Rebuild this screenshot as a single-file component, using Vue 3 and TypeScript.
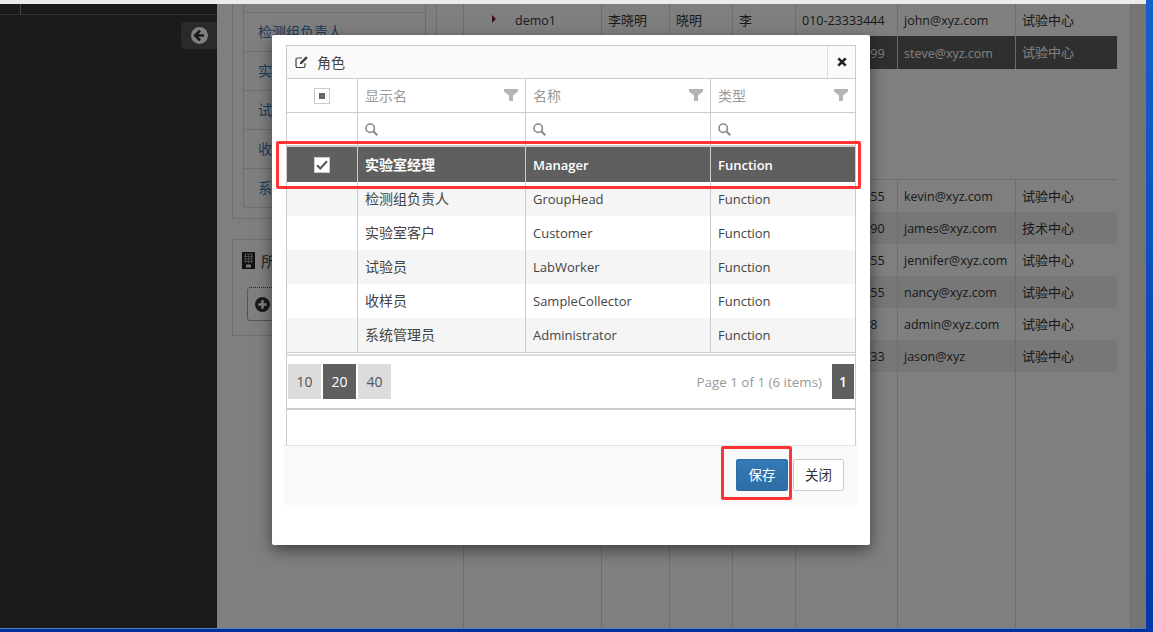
<script setup lang="ts">
interface Role { display: string; name: string; type: string }
interface Person { phone: string; mail: string; dept: string; stripe?: boolean; active?: boolean }

const listItems: string[] = ['检测组负责人', '实验室客户', '试验员', '收样员', '系统管理员']
const roles: Role[] = [
  { display: '实验室经理', name: 'Manager', type: 'Function' },
  { display: '检测组负责人', name: 'GroupHead', type: 'Function' },
  { display: '实验室客户', name: 'Customer', type: 'Function' },
  { display: '试验员', name: 'LabWorker', type: 'Function' },
  { display: '收样员', name: 'SampleCollector', type: 'Function' },
  { display: '系统管理员', name: 'Administrator', type: 'Function' }
]
const headers: string[] = ['显示名', '名称', '类型']
const lowerPeople: Person[] = [
  { phone: '010-55555555', mail: 'kevin@xyz.com', dept: '试验中心' },
  { phone: '010-12345690', mail: 'james@xyz.com', dept: '技术中心', stripe: true },
  { phone: '010-55555555', mail: 'jennifer@xyz.com', dept: '试验中心' },
  { phone: '010-55555555', mail: 'nancy@xyz.com', dept: '试验中心', stripe: true },
  { phone: '010-8888888', mail: 'admin@xyz.com', dept: '试验中心' },
  { phone: '010-33333333', mail: 'jason@xyz', dept: '试验中心', stripe: true }
]
const pageSizes: number[] = [10, 20, 40]
</script>

<template>
  <div class="screen">
    <div class="main">
      <div class="chrome"></div>
      <div class="app">
        <aside class="sidebar">
          <div class="side-top"><span class="side-tab"></span></div>
          <div class="back">
            <svg width="17" height="17" viewBox="0 0 17 17">
              <circle cx="8.5" cy="8.5" r="8.5" fill="#fff" />
              <path d="M9 3.6 4.2 8.5 9 13.4M4.8 8.5h8.2" fill="none" stroke="#333" stroke-width="2.6" />
            </svg>
          </div>
        </aside>

        <div class="content">
          <div class="left-col">
            <section class="panel list-panel">
              <div class="list-cut"></div>
              <div class="list">
                <a v-for="item in listItems" :key="item" class="list-item">{{ item }}</a>
              </div>
            </section>
            <section class="panel org-panel">
              <div class="org-title">
                <svg width="13" height="17" viewBox="0 0 13 17">
                  <rect width="13" height="17" fill="#222" />
                  <path d="M2 2h9M2 4.5h9M2 7h9M2 9.500h9M3.500 2v9M6.500 2v9M9.500 2v9" stroke="#999" stroke-width="1" fill="none" />
                  <rect x="4" y="12.500" width="5" height="3" fill="#eee" />
                </svg>
                <span>所属部门</span>
              </div>
              <div class="dotted">
                <svg width="15" height="15" viewBox="0 0 15 15">
                  <circle cx="7.500" cy="7.500" r="7.500" fill="#333" />
                  <path d="M7.500 3.300v8.400M3.300 7.500h8.400" stroke="#fff" stroke-width="2.600" />
                </svg>
              </div>
            </section>
          </div>

          <div class="table">
            <div class="t-row">
              <div class="t-cell first"><i class="arrow"></i>demo1</div>
              <div class="t-cell">李晓明</div>
              <div class="t-cell">晓明</div>
              <div class="t-cell">李</div>
              <div class="t-cell">010-23333444</div>
              <div class="t-cell">john@xyz.com</div>
              <div class="t-cell">试验中心</div>
            </div>
            <div class="t-row active">
              <div class="t-cell"></div>
              <div class="t-cell"></div>
              <div class="t-cell"></div>
              <div class="t-cell"></div>
              <div class="t-cell">010-99999999</div>
              <div class="t-cell">steve@xyz.com</div>
              <div class="t-cell">试验中心</div>
            </div>
            <div class="t-detail"></div>
            <div v-for="p in lowerPeople" :key="p.mail" class="t-row" :class="{ stripe: p.stripe }">
              <div class="t-cell"></div>
              <div class="t-cell"></div>
              <div class="t-cell"></div>
              <div class="t-cell"></div>
              <div class="t-cell">{{ p.phone }}</div>
              <div class="t-cell">{{ p.mail }}</div>
              <div class="t-cell">{{ p.dept }}</div>
            </div>
            <div class="t-row filler">
              <div v-for="n in 7" :key="n" class="t-cell"></div>
            </div>
          </div>

          <div class="scrollbar"></div>
        </div>

        <div class="backdrop">
          <div class="modal">
            <div class="grid-panel">
              <div class="title-bar">
                <div class="title-text">
                  <svg width="14" height="14" viewBox="0 0 14 14">
                    <path d="M10 8.200V11a1.500 1.500 0 0 1-1.500 1.500H2.500A1.500 1.500 0 0 1 1 11V4.500A1.500 1.500 0 0 1 2.500 3H7" fill="none" stroke="#444" stroke-width="1.200" />
                    <path d="M5 7.200 11 1.200l1.800 1.800-6 6H5z" fill="#444" />
                  </svg>
                  <span>角色</span>
                </div>
                <div class="close-cell">
                  <svg width="10" height="10" viewBox="0 0 10 10">
                    <path d="M1.300 1.300l7.400 7.400M8.700 1.300 1.300 8.700" stroke="#222" stroke-width="2.600" />
                  </svg>
                </div>
              </div>

              <div class="g-row head">
                <div class="g-cell check-cell">
                  <span class="checkbox"><i class="square"></i></span>
                </div>
                <div v-for="h in headers" :key="h" class="g-cell head-cell">
                  <span>{{ h }}</span>
                  <svg width="14" height="12" viewBox="0 0 14 12">
                    <path d="M0 0h14v2.500L9 6.500V12H5V6.500L0 2.500z" fill="#b4b4b4" />
                  </svg>
                </div>
              </div>

              <div class="g-row filter">
                <div class="g-cell"></div>
                <div v-for="h in headers" :key="h" class="g-cell">
                  <svg width="13" height="13" viewBox="0 0 13 13">
                    <circle cx="5.200" cy="5.200" r="4.200" fill="none" stroke="#888" stroke-width="1.600" />
                    <path d="M8.300 8.300 12.300 12.300" stroke="#888" stroke-width="2" />
                  </svg>
                </div>
              </div>

              <div
                v-for="(r, i) in roles"
                :key="r.name"
                class="g-row body"
                :class="{ selected: i === 0, after: i === 1, odd: i === 3 || i === 5 || i === 1 }"
              >
                <div class="g-cell check-cell">
                  <span v-if="i === 0" class="checkbox checked">
                    <svg width="12" height="10" viewBox="0 0 12 10">
                      <path d="M1 5.200 4.300 8.500 11 1.300" fill="none" stroke="#555" stroke-width="2" />
                    </svg>
                  </span>
                </div>
                <div class="g-cell cjk">{{ r.display }}</div>
                <div class="g-cell">{{ r.name }}</div>
                <div class="g-cell">{{ r.type }}</div>
              </div>

              <div class="pager">
                <div class="sizes">
                  <span v-for="s in pageSizes" :key="s" class="page-btn" :class="{ on: s === 20 }">{{ s }}</span>
                </div>
                <div class="page-info">
                  <span>Page 1 of 1 (6 items)</span>
                  <span class="page-btn on bold">1</span>
                </div>
              </div>
              <div class="grid-space"></div>
            </div>

            <div class="footer">
              <button class="btn primary">保存</button>
              <button class="btn plain">关闭</button>
            </div>

            <div class="mark mark-row"></div>
            <div class="mark mark-save"></div>
          </div>
        </div>
      </div>
      <div class="taskbar"></div>
    </div>
    <div class="desktop"></div>
  </div>
</template>

<style>
html, body { margin: 0; padding: 0; overflow: hidden; }
</style>

<style scoped>
.screen {
  display: flex;
  width: 1153px;
  height: 632px;
  overflow: hidden;
  font-family: "Open Sans", "Noto Sans CJK SC", sans-serif;
  font-size: 13px;
  color: #333;
}
.main { width: 1146px; display: flex; flex-direction: column; }
.desktop { width: 7px; background: linear-gradient(#1660cc, #0338a6); }
.chrome { height: 4px; background: #ebebeb; }
.taskbar { height: 4px; background: #00309a; border-top: 1px solid #4f7fc4; box-sizing: border-box; }
.app { position: relative; flex: 1; display: flex; overflow: hidden; min-height: 0; }

.sidebar { width: 217px; background: #383634; display: flex; flex-direction: column; align-items: flex-end; }
.side-top { width: 100%; border-bottom: 1px solid #666; flex: none; height: 10px; }
.side-tab { display: block; width: 20px; height: 10px; border-right: 1px solid #888; }
.back {
  margin-top: 7px;
  width: 36px;
  height: 27px;
  background: #555;
  border-radius: 4px 0 0 4px;
  display: flex;
  align-items: center;
  justify-content: center;
}

.content { flex: 1; background: #fff; display: flex; padding-left: 15px; min-width: 0; }
.left-col { width: 205px; margin-right: 26px; flex: none; }
.panel { border: 1px solid #ddd; box-sizing: border-box; }
.list-panel { height: 215px; border-top: 0; padding: 0 10px 0 10px; }
.list-cut { height: 8px; border: 1px solid #ddd; border-width: 0 1px 1px; }
.list { border: 1px solid #ddd; border-top: 0; border-radius: 0 0 3px 3px; }
.list-item {
  display: flex;
  align-items: center;
  height: 36px;
  padding: 0 0 2px 14px;
  color: #337ab7;
  font-size: 14px;
  border-bottom: 1px solid #ddd;
}
.list-item:last-child { border-bottom: 0; }
.org-panel { height: 97px; margin-top: 20px; padding: 11px 10px 0 9px; }
.org-title { display: flex; align-items: center; gap: 6px; height: 19px; font-size: 15px; color: #444; }
.dotted {
  margin: 17px 0 0 5px;
  height: 34px;
  border: 1px dotted #555;
  border-radius: 4px;
  box-sizing: border-box;
  display: flex;
  align-items: center;
  padding-left: 7px;
}

.table { width: 654px; flex: none; display: flex; flex-direction: column; margin-right: 13px; }
.t-row { display: grid; grid-template-columns: 138px 68px 63px 63px 102px 118px 102px; height: 32px; flex: none; }
.t-row.active { height: 33px; background: #5f5f5f; color: #fff; }
.t-row.stripe { background: #efefef; }
.t-row.filler { flex: 1; height: auto; min-height: 0; }
.t-cell {
  border-left: 1px solid #dcdcdc;
  padding: 0 0 2px 6px;
  box-sizing: border-box;
  display: flex;
  align-items: center;
  white-space: nowrap;
  font-size: 13px;
  overflow: hidden;
}
.t-cell:nth-child(5), .t-cell:nth-child(6), .t-cell.first { font-size: 12.5px; padding-top: 1px; padding-bottom: 0; }
.t-cell.first { padding-left: 28px; }
.arrow {
  display: block;
  width: 0;
  height: 0;
  margin-right: 19px;
  border-left: 4px solid #7a1c2e;
  border-top: 4px solid transparent;
  border-bottom: 4px solid transparent;
  transform: translateY(-2px);
}
.t-detail { height: 111px; border-bottom: 1px solid #dcdcdc; box-sizing: border-box; flex: none; }
.scrollbar { width: 16px; flex: none; background: #ebebeb; border-left: 1px solid #d6d6d6; box-sizing: border-box; }

.backdrop {
  position: absolute;
  inset: 0;
  background: rgba(0, 0, 0, 0.5);
  padding: 31px 0 0 272px;
  box-sizing: border-box;
}
.modal {
  position: relative;
  width: 598px;
  height: 510px;
  box-sizing: border-box;
  background: #fff;
  border-radius: 2px;
  box-shadow: 0 5px 15px rgba(0, 0, 0, 0.5);
  padding: 10px 13px 0 12px;
}
.grid-panel {
  width: 570px;
  height: 400px;
  margin-left: 2px;
  box-sizing: border-box;
  border: 1px solid #ccc;
  border-bottom: 0;
  display: flex;
  flex-direction: column;
}
.title-bar { height: 33px; flex: none; box-sizing: border-box; display: flex; background: #fafafa; border-bottom: 1px solid #ccc; }
.title-text { flex: 1; display: flex; align-items: center; gap: 8px; padding: 0 0 1px 8px; color: #444; font-size: 14px; }
.close-cell { width: 27px; border-left: 1px solid #ddd; display: flex; align-items: center; justify-content: center; }

.g-row { display: grid; grid-template-columns: 71px 168px 185px 1fr; flex: none; }
.g-cell {
  border-right: 1px solid #ccc;
  display: flex;
  align-items: center;
  padding-left: 7px;
  white-space: nowrap;
  min-width: 0;
}
.g-cell:last-child { border-right: 0; padding-left: 7px; }
.check-cell { justify-content: center; padding-left: 0; }
.cjk { font-size: 14px; padding-bottom: 3px; box-sizing: border-box; }
.selected .cjk { padding-bottom: 1px; }
.g-row.head { height: 34px; border-bottom: 1px solid #ccc; box-sizing: border-box; color: #999; font-size: 14px; }
.head-cell { justify-content: space-between; padding-right: 7px; padding-bottom: 1px; }
.head-cell:last-child { padding-right: 7px; }
.g-row.filter { height: 34px; border-bottom: 2px solid #ccc; box-sizing: border-box; }
.g-row.body { height: 34px; color: #444; }
.g-row.body.odd { background: #f5f5f5; }
.g-row.selected { height: 35px; background: #5f5f5f; color: #fff; font-weight: 600; }
.g-row.after { background: linear-gradient(#fff 4px, #f5f5f5 4px) !important; }
.g-row.body:nth-last-child(3) { border-bottom: 1px solid #ccc; height: 35px; box-sizing: border-box; }

.checkbox {
  width: 16px;
  height: 16px;
  box-sizing: border-box;
  border: 1px solid #ccc;
  background: #fff;
  display: flex;
  align-items: center;
  justify-content: center;
}
.square { display: block; width: 6px; height: 6px; background: #666; }

.pager {
  flex: none;
  height: 56px;
  box-sizing: border-box;
  border-top: 2px solid #ddd;
  margin-top: 1px;
  border-bottom: 2px solid #ccc;
  padding: 8px 1px 0 1px;
  display: flex;
  justify-content: space-between;
  align-items: flex-start;
}
.sizes { display: flex; gap: 2px; }
.page-btn {
  width: 33px;
  height: 35px;
  background: #dcdcdc;
  color: #555;
  font-size: 14px;
  display: flex;
  align-items: center;
  justify-content: center;
}
.page-btn.on { background: #5f5f5f; color: #fff; }
.page-btn.bold { width: 22px; font-weight: 600; }
.page-info { display: flex; align-items: center; gap: 10px; color: #999; font-size: 13.4px; height: 35px; }
.grid-space { flex: 1; }

.footer {
  width: 573px;
  height: 60px;
  box-sizing: border-box;
  background: #f9f9f9;
  border-top: 1px solid #e5e5e5;
  padding: 13px 13px 0 0;
  display: flex;
  justify-content: flex-end;
  gap: 5px;
}
.btn {
  height: 32px;
  box-sizing: border-box;
  border-radius: 2px;
  font-family: inherit;
  font-size: 13.5px;
  padding: 0 0 2px;
  cursor: pointer;
}
.primary { width: 52px; background: linear-gradient(#337ab7, #2e6da4); color: #fff; border: 1px solid #2e6da4; }
.plain { width: 51px; background: #fff; color: #333; border: 1px solid #ccc; }

.mark { position: absolute; box-sizing: border-box; border: 3px solid #f33; border-radius: 2px; pointer-events: none; }
.mark-row { left: 4px; top: 106px; width: 585px; height: 48px; }
.mark-save { left: 449px; top: 411px; width: 71px; height: 54px; }
</style>
